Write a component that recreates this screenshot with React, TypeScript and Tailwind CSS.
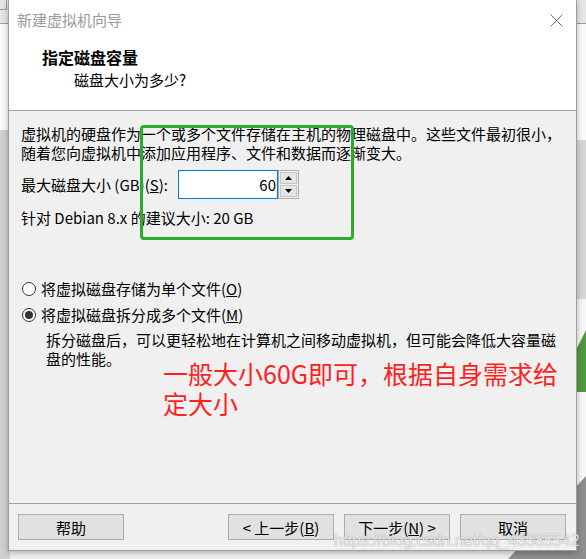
import React from "react";

function Radio({ checked }: { checked?: boolean }) {
  return (
    <span className="w-[14px] h-[14px] rounded-full border border-[#333333] bg-white flex items-center justify-center shrink-0">
      {checked ? <span className="w-[8px] h-[8px] rounded-full bg-[#333333]" /> : null}
    </span>
  );
}

function Btn({ children }: { children: React.ReactNode }) {
  return (
    <div className="w-[106px] h-[26px] bg-[#e1e1e1] border border-[#adadad] flex items-center justify-center text-[15px] leading-[19px]">
      {children}
    </div>
  );
}

export default function App() {
  return (
    <div className="relative w-[586px] h-[559px] overflow-hidden bg-[#f0f0f0] font-['Noto_Sans_CJK_SC',sans-serif] text-[15px] leading-[19px] text-black">
      {/* backdrop window behind the dialog */}
      <div className="absolute inset-0">
        <div className="absolute left-0 top-0 w-full h-[23px] bg-[#e6e6e6]" />
        <div className="absolute left-0 top-[23px] w-full h-px bg-[#7ea6c6]" />
        <div className="absolute left-0 top-[24px] w-full h-[116px] bg-[#fafafa]" />
        <div className="absolute left-0 top-[130px] w-[10px] h-[429px] bg-[#d0d0d0]" />
        <div className="absolute right-0 top-[140px] w-[12px] h-[159px] bg-[#d6d6d6]" />
        <div className="absolute right-0 top-[299px] w-[12px] h-[260px] bg-[#f6f6f6]" />
        <div className="absolute left-0 top-0 w-[7px] h-[10px] border-r border-b border-[#9a9a9a]" />
        <svg className="absolute left-0 top-0" width="586" height="559" viewBox="0 0 586 559">
          <polygon points="577,348 586,330 586,392 577,392" fill="#4e9a3c" />
          <polygon points="508,559 586,476 586,559" fill="#8e8e8e" />
        </svg>
      </div>

      {/* dialog */}
      <div className="relative ml-[8px] w-[569px] h-[551px] flex flex-col border-x border-b border-[#9e9e9e] bg-[#f0f0f0] shadow-[0_2px_6px_rgba(0,0,0,0.28)]">
        {/* header */}
        <div className="h-[111px] shrink-0 bg-white border-b border-[#a0a0a0]">
          <div className="h-[40px] flex items-center justify-between pl-[8px] pr-[13px]">
            <span className="text-[15px] leading-[20px] text-[#9b9b9b]">新建虚拟机向导</span>
            <svg width="13" height="13" viewBox="0 0 13 13">
              <path d="M0.5 0.5 L12.5 12.5 M12.5 0.5 L0.5 12.5" stroke="#707070" strokeWidth="1" fill="none" />
            </svg>
          </div>
          <div className="pl-[33px] mt-[7px] text-[16px] leading-[20px] font-bold">指定磁盘容量</div>
          <div className="pl-[65px] mt-[3px] text-[15px] leading-[20px]">磁盘大小为多少?</div>
        </div>

        {/* body */}
        <div className="flex-1 flex flex-col pl-[12px] pt-[13px]">
          <div className="whitespace-nowrap">虚拟机的硬盘作为一个或多个文件存储在主机的物理磁盘中。这些文件最初很小，</div>
          <div className="whitespace-nowrap">随着您向虚拟机中添加应用程序、文件和数据而逐渐变大。</div>

          <div className="mt-[8px] h-[29px] flex items-center">
            <div className="w-[157px] whitespace-nowrap">
              最大磁盘大小 (GB)(<span className="underline">S</span>):
            </div>
            <div className="w-[100px] h-[29px] border border-[#0078d7] bg-white flex items-center justify-end pr-[1px]">
              60
            </div>
            <div className="w-[21px] h-[29px] flex flex-col border border-[#adadad] bg-[#f0f0f0]">
              <div className="flex-1 m-px border border-[#c6c6c6] bg-[#e5e5e5] flex items-center justify-center">
                <svg width="7" height="4" viewBox="0 0 7 4">
                  <polygon points="0,4 3.5,0 7,4" fill="#000" />
                </svg>
              </div>
              <div className="flex-1 mx-px mb-px border border-[#c6c6c6] bg-[#e5e5e5] flex items-center justify-center">
                <svg width="7" height="4" viewBox="0 0 7 4">
                  <polygon points="0,0 7,0 3.5,4" fill="#000" />
                </svg>
              </div>
            </div>
          </div>

          <div className="mt-[9px] whitespace-nowrap">针对 Debian 8.x 的建议大小: 20 GB</div>

          <div className="mt-[52px] flex items-center gap-[5px] ml-[1px]">
            <Radio />
            <span className="whitespace-nowrap">
              将虚拟磁盘存储为单个文件(<span className="underline">O</span>)
            </span>
          </div>
          <div className="mt-[7px] flex items-center gap-[5px] ml-[1px]">
            <Radio checked />
            <span className="whitespace-nowrap">
              将虚拟磁盘拆分成多个文件(<span className="underline">M</span>)
            </span>
          </div>
          <div className="mt-[6px] ml-[25px]">
            <div className="whitespace-nowrap">拆分磁盘后，可以更轻松地在计算机之间移动虚拟机，但可能会降低大容量磁</div>
            <div className="whitespace-nowrap">盘的性能。</div>
          </div>
        </div>

        {/* footer */}
        <div className="h-[47px] shrink-0 border-t border-[#a0a0a0] flex items-start pt-[10px] pl-[9px] pr-[10px]">
          <Btn>帮助</Btn>
          <div className="ml-auto flex gap-[10px]">
            <Btn>
              &lt; 上一步(<span className="underline">B</span>)
            </Btn>
            <Btn>
              下一步(<span className="underline">N</span>) &gt;
            </Btn>
            <Btn>取消</Btn>
          </div>
        </div>
      </div>

      {/* annotations over the screenshot */}
      <div className="absolute left-[140px] top-[125px] w-[214px] h-[115px] border-[3px] border-[#2caa2c] rounded-[4px]" />
      <div className="absolute left-[163px] top-[358px] text-[25px] leading-[30px] text-[#ff1f1f]">
        <div className="whitespace-nowrap">一般大小60G即可，根据自身需求给</div>
        <div className="whitespace-nowrap">定大小</div>
      </div>
      <div className="absolute left-[334px] top-[531px] whitespace-nowrap font-['Liberation_Sans',sans-serif] text-[16px] leading-[20px] text-[rgba(255,255,255,0.8)] [text-shadow:0_0_1px_rgba(0,0,0,0.45)]">
        https://blog.csdn.net/qq_43385542
      </div>
    </div>
  );
}
